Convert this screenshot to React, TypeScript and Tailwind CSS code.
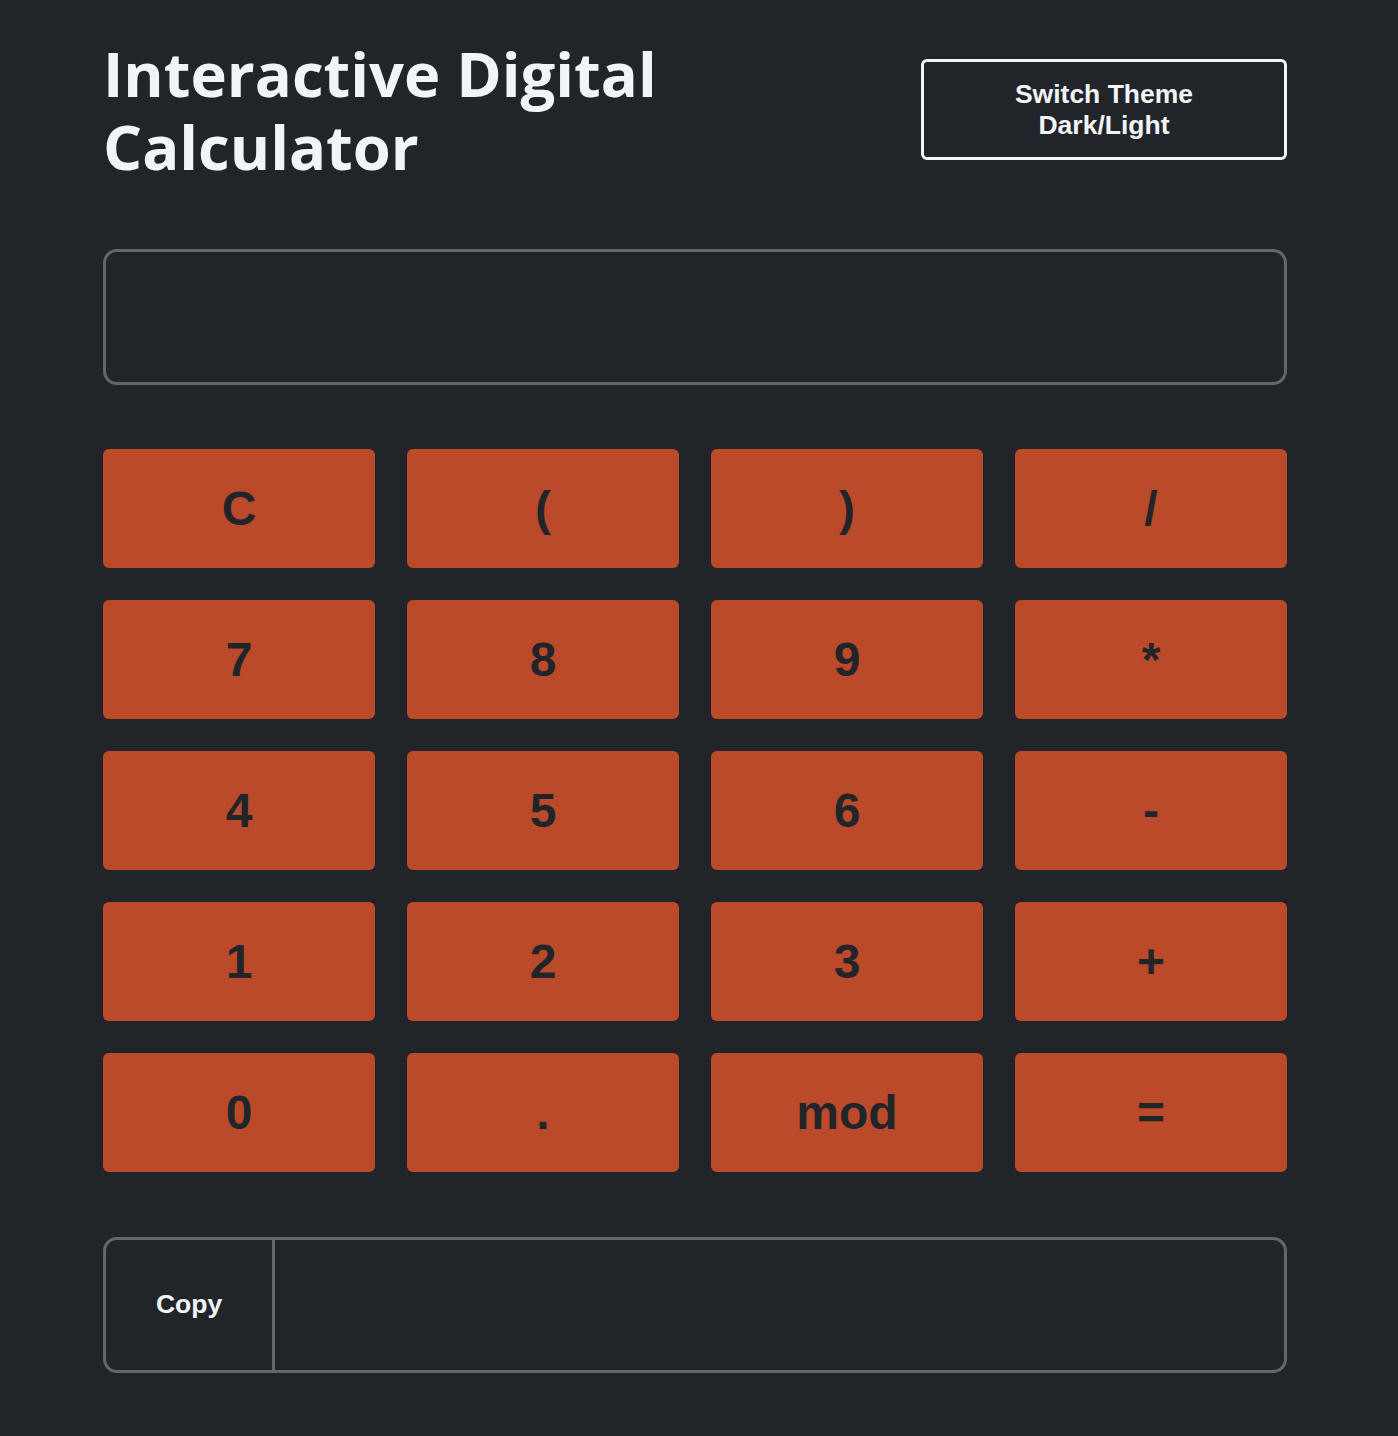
import React from "react";

const keys = ["C", "(", ")", "/", "7", "8", "9", "*", "4", "5", "6", "-", "1", "2", "3", "+", "0", ".", "mod", "="];

export default function App() {
  return (
    <div className="min-h-screen w-full bg-[#212529]" style={{ minHeight: 1436 }}>
      <div className="w-[1184px] ml-[103px] pt-[37px]">
        <div className="flex items-start justify-between">
          <h1
            className="text-[61.5px] leading-[73px] font-bold text-[#f1f5f9] m-0"
            style={{ fontFamily: '"Open Sans", "Noto Sans", sans-serif' }}
          >
            Interactive Digital
            <br />
            Calculator
          </h1>
          <button
            className="mt-[22px] w-[366px] h-[101px] border-[3px] border-[#f1f5f9] rounded-[6px] bg-transparent text-[#f1f5f9] font-bold text-[26.5px] leading-[31px]"
            style={{ fontFamily: '"Liberation Sans", Arial, sans-serif' }}
          >
            Switch Theme
            <br />
            Dark/Light
          </button>
        </div>
        <div className="mt-[66px] h-[136px] border-[3px] border-[#666666] rounded-[14px]" />
        <div className="mt-[64px] grid grid-cols-4 gap-[32px]">
          {keys.map((k) => (
            <button
              key={k}
              className="h-[119px] rounded-[6px] bg-[#bb4a2b] text-[#212529] font-bold text-[48px] leading-none flex items-center justify-center"
              style={{ fontFamily: '"Liberation Sans", Arial, sans-serif' }}
            >
              {k}
            </button>
          ))}
        </div>
        <div className="mt-[65px] h-[136px] flex border-[3px] border-[#666666] rounded-[14px] overflow-hidden">
          <button
            className="w-[169px] h-full border-r-[3px] border-[#666666] bg-transparent text-[#f1f5f9] font-bold text-[26.5px]"
            style={{ fontFamily: '"Liberation Sans", Arial, sans-serif' }}
          >
            Copy
          </button>
          <div className="flex-1" />
        </div>
      </div>
    </div>
  );
}
